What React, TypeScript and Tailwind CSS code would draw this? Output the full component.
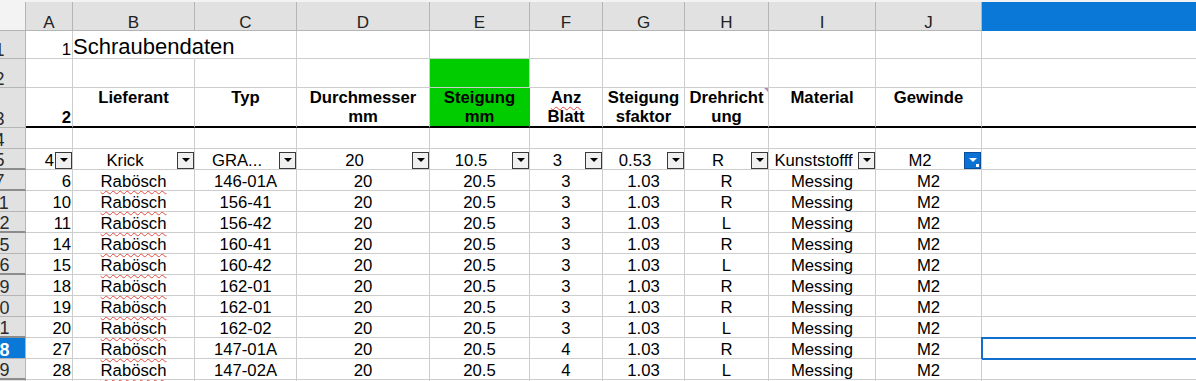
import type { ReactNode } from "react";
import clsx from "clsx";

// column widths A..J, border included
const COLS = [
  "w-[47px]",
  "w-[122px]",
  "w-[102px]",
  "w-[133px]",
  "w-[100px]",
  "w-[73px]",
  "w-[82px]",
  "w-[84px]",
  "w-[107px]",
  "w-[106px]",
];
const LETTERS = ["A", "B", "C", "D", "E", "F", "G", "H", "I", "J"];

type Item = {
  row: number;
  nr: string;
  typ: string;
  blatt: string;
  dir: string;
  gap?: boolean;
};

const ITEMS: Item[] = [
  { row: 7, nr: "6", typ: "146-01A", blatt: "3", dir: "R", gap: true },
  { row: 11, nr: "10", typ: "156-41", blatt: "3", dir: "R" },
  { row: 12, nr: "11", typ: "156-42", blatt: "3", dir: "L", gap: true },
  { row: 15, nr: "14", typ: "160-41", blatt: "3", dir: "R" },
  { row: 16, nr: "15", typ: "160-42", blatt: "3", dir: "L", gap: true },
  { row: 19, nr: "18", typ: "162-01", blatt: "3", dir: "R" },
  { row: 20, nr: "19", typ: "162-01", blatt: "3", dir: "R" },
  { row: 21, nr: "20", typ: "162-02", blatt: "3", dir: "L", gap: true },
  { row: 28, nr: "27", typ: "147-01A", blatt: "4", dir: "R" },
  { row: 29, nr: "28", typ: "147-02A", blatt: "4", dir: "L", gap: true },
];

const squiggle = "underline decoration-wavy decoration-[#e5483f] decoration-1 underline-offset-[3px]";

function RowHead({ n, gap, active }: { n: number; gap?: boolean; active?: boolean }) {
  return (
    <div
      className={clsx(
        "flex w-[52px] shrink-0 items-end justify-center border-r border-[#b5b5b5] text-[18px] leading-[15px]",
        gap ? "border-b-2 border-b-[#8c8c8c]" : "border-b",
        active ? "bg-[#0a78d7] font-bold text-white" : "bg-[#e1e1e1] text-[#2b2b2b]"
      )}
    >
      {n}
    </div>
  );
}

function Cell({ i, className, children }: { i: number; className?: string; children?: ReactNode }) {
  return (
    <div className={clsx("flex shrink-0 border-r border-b border-[#cdcdcd] leading-[17px]", COLS[i], className)}>
      {children}
    </div>
  );
}

function Rest({ className }: { className?: string }) {
  return <div className={clsx("w-[260px] shrink-0 border-b border-[#cdcdcd]", className)} />;
}

function FilterBtn({ active }: { active?: boolean }) {
  return (
    <span
      className={clsx(
        "relative flex size-[17px] shrink-0 justify-center self-end border pt-[5px]",
        active ? "border-[#0a4f9c] bg-[#0a72d4]" : "border-[#3a3a3a] bg-[#f0f0f0]"
      )}
    >
      <svg width="8" height="4" viewBox="0 0 8 4">
        <path d="M0 0h8L4 4z" fill={active ? "#fff" : "#000"} />
      </svg>
      {active && <span className="absolute right-[1px] bottom-[1px] size-[3px] bg-white" />}
    </span>
  );
}

function FilterCell({ i, children, align = "center", active }: { i: number; children: ReactNode; align?: "center" | "right"; active?: boolean }) {
  return (
    <Cell i={i} className="items-end">
      <span className={clsx("min-w-0 flex-1 overflow-hidden whitespace-nowrap", align === "right" ? "pr-[1px] text-right" : "text-center")}>
        {children}
      </span>
      <FilterBtn active={active} />
    </Cell>
  );
}

function HeadCell({ i, children, className }: { i: number; children?: ReactNode; className?: string }) {
  return (
    <Cell i={i} className={clsx("relative items-start justify-center border-b-2 border-b-black text-center font-bold", className)}>
      <span className="leading-[19px]">{children}</span>
    </Cell>
  );
}

export default function App() {
  const data = (it: Item) => [
    <span className="w-full pr-[1px] text-right">{it.nr}</span>,
    <span className={squiggle}>Rabösch</span>,
    it.typ,
    "20",
    "20.5",
    it.blatt,
    "1.03",
    it.dir,
    "Messing",
    "M2",
  ];

  return (
    <div className="h-[381px] w-[1196px] overflow-hidden bg-white font-['Liberation_Sans',Arial,sans-serif] text-[16.7px] text-black">
      <div className="h-[2px] bg-[#f3f3f3]" />
      <div className="ml-[-26px] flex flex-col">
        {/* column letters */}
        <div className="flex h-[29px]">
          <div className="w-[52px] shrink-0 border-r border-b border-[#b5b5b5] bg-[#f3f3f3]" />
          {LETTERS.map((l, i) => (
            <div
              key={l}
              className={clsx(
                "flex shrink-0 items-end justify-center border-r border-b border-[#b5b5b5] bg-[#e1e1e1] text-[17px] leading-[14px] text-[#222]",
                COLS[i]
              )}
            >
              {l}
            </div>
          ))}
          <div className="w-[260px] shrink-0 border-b border-[#0a78d7] bg-[#0a78d7]" />
        </div>

        {/* row 1: title */}
        <div className="flex h-[28px]">
          <RowHead n={1} />
          <Cell i={0} className="items-end justify-end pr-[1px]">1</Cell>
          <Cell i={1} className="items-end border-r-transparent">
            <span className="whitespace-nowrap text-[22px] leading-[22px]">Schraubendaten</span>
          </Cell>
          {COLS.slice(2).map((_, k) => (
            <Cell key={k} i={k + 2} />
          ))}
          <Rest />
        </div>

        {/* row 2 */}
        <div className="flex h-[29px]">
          <RowHead n={2} />
          {COLS.map((_, i) => (
            <Cell key={i} i={i} className={i === 4 ? "border-[#00cc00] bg-[#00cc00]" : undefined} />
          ))}
          <Rest />
        </div>

        {/* row 3: headings */}
        <div className="flex h-[40px]">
          <RowHead n={3} />
          <Cell i={0} className="items-end justify-end border-b-2 border-b-black pr-[1px] font-bold">2</Cell>
          <HeadCell i={1}>Lieferant</HeadCell>
          <HeadCell i={2}>Typ</HeadCell>
          <HeadCell i={3}>
            Durchmesser
            <br />
            mm
          </HeadCell>
          <HeadCell i={4} className="border-r-[#00cc00] bg-[#00cc00]">
            Steigung
            <br />
            mm
          </HeadCell>
          <HeadCell i={5}>
            <span className={squiggle}>Anz</span>
            <br />
            Blatt
          </HeadCell>
          <HeadCell i={6}>
            Steigung
            <br />
            sfaktor
          </HeadCell>
          <HeadCell i={7}>
            Drehricht
            <br />
            ung
            <svg className="absolute top-0 right-0" width="4" height="4" viewBox="0 0 4 4">
              <path d="M0 0h4v4z" fill="#b88cb8" />
            </svg>
          </HeadCell>
          <HeadCell i={8}>Material</HeadCell>
          <HeadCell i={9}>Gewinde</HeadCell>
          <Rest className="border-b-2 border-b-black" />
        </div>

        {/* row 4 */}
        <div className="flex h-[21px]">
          <RowHead n={4} />
          {COLS.map((_, i) => (
            <Cell key={i} i={i} />
          ))}
          <Rest />
        </div>

        {/* row 5: autofilter */}
        <div className="flex h-[21px]">
          <RowHead n={5} gap />
          <FilterCell i={0} align="right">4</FilterCell>
          <FilterCell i={1}>
            <span className={squiggle}>Krick</span>
          </FilterCell>
          <FilterCell i={2}>
            <span className={squiggle}>GRA...</span>
          </FilterCell>
          <FilterCell i={3}>20</FilterCell>
          <FilterCell i={4}>10.5</FilterCell>
          <FilterCell i={5}>3</FilterCell>
          <FilterCell i={6}>0.53</FilterCell>
          <FilterCell i={7}>R</FilterCell>
          <FilterCell i={8}>
            <span className={squiggle}>Kunststofff</span>
          </FilterCell>
          <FilterCell i={9} active>
            M2
          </FilterCell>
          <Rest />
        </div>

        {ITEMS.map((it) => (
          <div key={it.row} className="flex h-[21px]">
            <RowHead n={it.row} gap={it.gap} active={it.row === 28} />
            {data(it).map((v, i) => (
              <Cell key={i} i={i} className="items-end justify-center whitespace-nowrap">
                {v}
              </Cell>
            ))}
            <Rest className={it.row === 28 ? "outline-2 -outline-offset-1 outline-[#1170cf]" : undefined} />
          </div>
        ))}

        <div className="flex h-[21px]">
          <RowHead n={30} />
          {COLS.map((_, i) => (
            <Cell key={i} i={i} />
          ))}
          <Rest />
        </div>
      </div>
    </div>
  );
}
